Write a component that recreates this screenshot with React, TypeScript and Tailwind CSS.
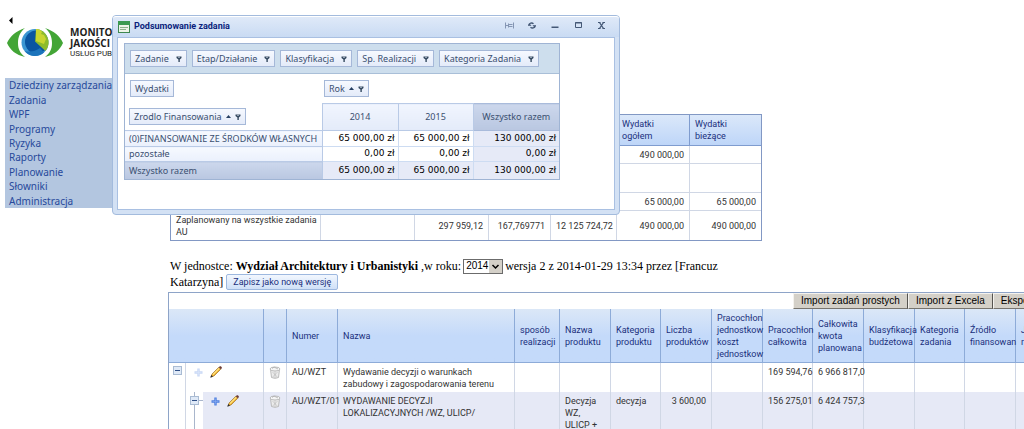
import type { ReactNode } from 'react';
import { clsx } from 'clsx';

const menu = [
  'Dziedziny zarządzania',
  'Zadania',
  'WPF',
  'Programy',
  'Ryzyka',
  'Raporty',
  'Planowanie',
  'Słowniki',
  'Administracja',
];

const filters = ['Zadanie', 'Etap/Działanie', 'Klasyfikacja', 'Sp. Realizacji', 'Kategoria Zadania'];

const gridHeaders = [
  ['Numer'],
  ['Nazwa'],
  ['sposób', 'realizacji'],
  ['Nazwa', 'produktu'],
  ['Kategoria', 'produktu'],
  ['Liczba', 'produktów'],
  ['Pracochłon', 'jednostkow', 'koszt', 'jednostkow'],
  ['Pracochłon', 'całkowita'],
  ['Całkowita', 'kwota', 'planowana'],
  ['Klasyfikacja', 'budżetowa'],
  ['Kategoria', 'zadania'],
  ['Źródło', 'finansowan'],
  ['J', 'r'],
];

function Logo() {
  return (
    <div className="flex h-[34px] items-center gap-[7px] pl-[7px]">
      <svg width="56" height="32" viewBox="0 0 56 32" className="shrink-0" aria-hidden="true">
        <path d="M18 1C9 4 3 9 0 16c3 7 9 12 18 14-5-4-7-8-7-14s2-11 7-15Z" fill="#43a536" />
        <path d="M38 1c9 3 15 8 18 15-3 7-9 12-18 14 5-4 7-8 7-14S43 5 38 1Z" fill="#43a536" />
        <circle cx="28" cy="15.5" r="13.5" fill="#3b96d2" />
        <circle cx="29.500" cy="15" r="11.500" fill="#0a55a0" />
        <path d="M29 2A13.500 13.500 0 0 1 38.500 24L28 14.500Z" fill="#8dbb2a" />
        <path d="M29 2c3 0 5 1 6 3l-1 2 3 1 2 4-2 5-8-3Z" fill="#c9d62e" />
        <path d="M17.500 24A13.500 13.500 0 0 0 37 25.500L33 21q-7 5-15.500 3Z" fill="#1c74bb" />
      </svg>
      <div className="font-['Open_Sans',sans-serif] text-[10px] leading-[11px] font-bold whitespace-nowrap text-[#1d1d1b]">
        <div>MONITO</div>
        <div>JAKOŚCI</div>
        <div className="font-[Roboto,sans-serif] text-[8px] leading-[10px] font-normal">USŁUG PUBL</div>
      </div>
    </div>
  );
}

function FilterIcon() {
  return (
    <svg width="6" height="6" viewBox="0 0 6 6" aria-hidden="true">
      <path d="M0.5 0.5h5v1.5L3.8 3.5V6H2.4V3.5L0.5 2Z" fill="#34495f" />
      <path d="M2 1.3h2" stroke="#dbe5f5" strokeWidth="0.7" />
    </svg>
  );
}

function SortIcon() {
  return (
    <svg width="5" height="3" viewBox="0 0 5 3" aria-hidden="true">
      <path d="M2.5 0 5 3H0Z" fill="#263f62" />
    </svg>
  );
}

function FieldButton({ children, sort, filter }: { children: ReactNode; sort?: boolean; filter?: boolean }) {
  return (
    <button
      type="button"
      className="flex h-[17px] items-center gap-1 border border-[#a5b8d8] bg-gradient-to-b from-[#f6f9ff] to-[#e4ebf9] px-1 whitespace-nowrap text-[#3a4f70]"
    >
      {children}
      {sort && <SortIcon />}
      {filter && (
        <span className={clsx(!sort && 'pl-[3px]')}>
          <FilterIcon />
        </span>
      )}
    </button>
  );
}

function WindowButtons() {
  const cls = 'flex h-3 w-3 items-center justify-center';
  return (
    <div className="flex gap-[11px] pr-3 pb-[3px] text-[#445876]">
      <button type="button" aria-label="Przypnij" className={cls}>
        <svg width="9" height="7" viewBox="0 0 9 7" fill="none" stroke="#8495b3">
          <path d="M0.5 0.5v6M0.5 3.5h3M3.5 1.5v4M3.5 2.5h4M3.5 4.5h4M8.5 0.5v6" />
        </svg>
      </button>
      <button type="button" aria-label="Odśwież" className={cls}>
        <svg width="8" height="7" viewBox="0 0 8 7" fill="none" stroke="currentColor" strokeWidth="1.4">
          <path d="M1 3C1 1 4 0.5 5.5 1.8M7 4C7 6 4 6.5 2.5 5.2" />
          <path d="M0 3.500h3L1.500 2ZM5 3.500h3L6.500 5Z" strokeWidth="0.6" fill="currentColor" />
        </svg>
      </button>
      <button type="button" aria-label="Minimalizuj" className={cls}>
        <svg width="8" height="7" viewBox="0 0 8 7">
          <path d="M0.5 4.5h7v1.5h-7Z" fill="currentColor" />
        </svg>
      </button>
      <button type="button" aria-label="Maksymalizuj" className={cls}>
        <svg width="7" height="7" viewBox="0 0 7 7" fill="none" stroke="currentColor">
          <path d="M0.5 0.5h6v5h-6Z" />
          <path d="M0 1h7" />
        </svg>
      </button>
      <button type="button" aria-label="Zamknij" className={cls}>
        <svg width="7" height="7" viewBox="0 0 7 7" fill="none" stroke="currentColor" strokeWidth="1.3">
          <path d="M1.5 0.5 5.5 6.5M5.5 0.5 1.5 6.5" />
          <path d="M0 0.5h2.500M4.500 0.5h2.500M0 6.500h2.500M4.500 6.500h2.500" strokeWidth="1" />
        </svg>
      </button>
    </div>
  );
}

const num = "font-['DejaVu_Sans',sans-serif] pr-[3px]";
const label =
  'border border-l-0 border-[#b9cae6] bg-gradient-to-b from-[#f6f9ff] to-[#eaf0fc] pl-1 text-left font-normal whitespace-nowrap text-[#3a4f70]';

function Pivot() {
  return (
    <div className="w-[436px] border border-[#9fb4d4] font-['Noto_Sans',sans-serif] text-[9px] text-[#3a4f70]">
      <div className="flex h-[30px] items-center gap-[5px] border-b border-[#a9bfd8] bg-[#cddeed] pl-[5px]">
        {filters.map((f) => (
          <FieldButton key={f} filter>
            {f}
          </FieldButton>
        ))}
      </div>
      <div className="flex h-[29px] items-center pl-[5px]">
        <div className="w-[194px]">
          <FieldButton>Wydatki</FieldButton>
        </div>
        <FieldButton sort filter>
          Rok
        </FieldButton>
      </div>
      <table className="w-full table-fixed border-collapse">
        <colgroup>
          <col className="w-[197px]" />
          <col className="w-[76px]" />
          <col className="w-[75px]" />
          <col />
        </colgroup>
        <thead>
          <tr className="h-[27px]">
            <th className="pl-1 font-normal">
              <FieldButton sort filter>
                Zrodlo Finansowania
              </FieldButton>
            </th>
            <th className="border border-[#b9cae6] bg-gradient-to-b from-[#f1f5fe] to-[#e4ebf9] font-normal">2014</th>
            <th className="border border-[#b9cae6] bg-gradient-to-b from-[#f1f5fe] to-[#e4ebf9] font-normal">2015</th>
            <th className="border-y border-[#a9bbdb] bg-gradient-to-b from-[#ccd7ec] to-[#b9c7e1] font-normal">
              Wszystko razem
            </th>
          </tr>
        </thead>
        <tbody className="text-right text-black">
          <tr className="h-4">
            <th className={label}>(0)FINANSOWANIE ZE ŚRODKÓW WŁASNYCH</th>
            <td className={clsx('border border-[#cddcf2]', num)}>65 000,00 zł</td>
            <td className={clsx('border border-[#cddcf2]', num)}>65 000,00 zł</td>
            <td className={clsx('border-y border-[#cddcf2] bg-[#e6eaf7]', num)}>130 000,00 zł</td>
          </tr>
          <tr className="h-[15px]">
            <th className={label}>pozostałe</th>
            <td className={clsx('border border-[#cddcf2]', num)}>0,00 zł</td>
            <td className={clsx('border border-[#cddcf2]', num)}>0,00 zł</td>
            <td className={clsx('border-y border-[#cddcf2] bg-[#e6eaf7]', num)}>0,00 zł</td>
          </tr>
          <tr className="h-[17px]">
            <th className="border-r border-[#b9cae6] bg-gradient-to-b from-[#ccd7ec] to-[#b9c7e1] pl-1 text-left font-normal text-[#3a4f70]">
              Wszystko razem
            </th>
            <td className={clsx('border-r border-[#cddcf2] bg-[#e6eaf7]', num)}>65 000,00 zł</td>
            <td className={clsx('border-r border-[#cddcf2] bg-[#e6eaf7]', num)}>65 000,00 zł</td>
            <td className={clsx('bg-[#e6eaf7]', num)}>130 000,00 zł</td>
          </tr>
        </tbody>
      </table>
    </div>
  );
}

function SummaryDialog() {
  return (
    <section
      role="dialog"
      aria-label="Podsumowanie zadania"
      className="absolute top-[15px] left-[112px] z-10 w-[508px] rounded-[4px] border border-[#a3bbdd] bg-[#d3e1f4] px-1 pb-1"
    >
      <header className="-mx-1 flex h-[21px] items-center justify-between rounded-t-[3px] border-t border-white bg-gradient-to-b from-[#dfe9f8] to-[#c9dbf3]">
        <div className="flex items-center gap-1 pl-[5px]">
          <svg width="12" height="12" viewBox="0 0 12 12" aria-hidden="true">
            <rect x="0.5" y="0.5" width="11" height="11" fill="#eef4e8" stroke="#3f8750" />
            <path d="M0 0h12v4H0Z" fill="#3c9a50" />
            <path d="M2 6.5h8M2 8.5h6" stroke="#8eb28b" />
          </svg>
          <h2 className="font-[Roboto,sans-serif] text-[9px] font-bold text-[#0b1f7c]">Podsumowanie zadania</h2>
        </div>
        <WindowButtons />
      </header>
      <div className="h-[173px] border border-[#a9c0e2] bg-white px-1.5 pt-[5px]">
        <Pivot />
      </div>
    </section>
  );
}

const summaryRows = [
  { h: 'h-[18px]', cells: ['', '', '', '', '', '490 000,00', ''] },
  { h: 'h-[29px]', cells: ['', '', '', '', '', '', ''] },
  { h: 'h-[18px]', cells: ['', '', '', '', '', '65 000,00', '65 000,00'] },
  {
    h: 'h-[29px]',
    cells: [
      'Zaplanowany na wszystkie zadania AU',
      '',
      '297 959,12',
      '167,769771',
      '12 125 724,72',
      '490 000,00',
      '490 000,00',
    ],
  },
];

function SummaryTable() {
  return (
    <div className="ml-[2px] w-[592px] border border-[#8298c4]">
      <table className="w-full table-fixed border-separate border-spacing-0 text-[9px] leading-3 text-[#333]">
        <colgroup>
          <col className="w-[150px]" />
          <col className="w-[94px]" />
          <col className="w-[74px]" />
          <col className="w-[62px]" />
          <col className="w-[66px]" />
          <col className="w-[73px]" />
          <col />
        </colgroup>
        <thead>
          <tr className="h-[31px] bg-gradient-to-b from-[#dbe8fa] to-[#bdd5f8] text-left text-[#1a2f7c]">
            {['', '', '', '', '', 'Wydatki ogółem', 'Wydatki bieżące'].map((h, i) => (
              <th key={i} className="border-r border-b border-[#7f9ccf] pr-7 pl-[5px] font-normal last:border-r-0">
                {h}
              </th>
            ))}
          </tr>
        </thead>
        <tbody>
          {summaryRows.map((row, r) => (
            <tr key={r} className={row.h}>
              {row.cells.map((c, i) => (
                <td
                  key={i}
                  className={clsx(
                    'border-r border-b border-[#d0d7e5] pl-[5px] last:border-r-0',
                    i === 0 ? 'text-left' : 'pr-[5px] text-right whitespace-nowrap',
                    r === 3 && 'border-b-0',
                  )}
                >
                  {c}
                </td>
              ))}
            </tr>
          ))}
        </tbody>
      </table>
    </div>
  );
}

function PlusIcon({ faded }: { faded?: boolean }) {
  return (
    <svg width="9" height="9" viewBox="0 0 9 9" className={clsx(faded && 'opacity-30')} aria-hidden="true">
      <path d="M3.3 0.5h2.4v2.8h2.8v2.4H5.7v2.8H3.3V5.7H0.5V3.3h2.8Z" fill="#4f80e0" />
      <path d="M4.5 1.5v6M1.5 4.5h6" stroke="#8fb0f2" strokeWidth="0.6" />
    </svg>
  );
}

function PencilIcon() {
  return (
    <svg width="12" height="12" viewBox="0 0 12 12" aria-hidden="true">
      <path d="M1.2 10.8 2 8 8.8 1.2 10.800 3.200 4 10Z" fill="#f0b02c" stroke="#8f6420" strokeWidth="0.6" />
      <path d="M2.900 8.600 9.200 2.300" stroke="#ffe789" strokeWidth="1.200" />
      <path d="m8.800 1.200 1-1h1l1 1v1l-1 1Z" fill="#6d3c34" />
      <path d="M0.2 11.800 1.300 9 3 10.700Z" fill="#2b2b2b" />
    </svg>
  );
}

function TrashIcon() {
  return (
    <svg width="12" height="13" viewBox="0 0 12 13" fill="none" stroke="#adadad" strokeWidth="0.8" aria-hidden="true">
      <path d="M1.5 3.5 2.5 11.5Q6 13.2 9.5 11.5L10.5 3.5" fill="#ececec" />
      <ellipse cx="6" cy="3" rx="5" ry="2" fill="#f5f5f5" />
      <path d="M3.5 6 8.3 11M8.5 6 3.7 11M6 5.5V12" strokeWidth="0.5" />
      <path d="M3 2.5 5 1 7 2 9 3" />
    </svg>
  );
}

function Expander() {
  return (
    <svg width="9" height="9" viewBox="0 0 9 9" aria-hidden="true">
      <rect x="0.5" y="0.5" width="8" height="8" fill="#dfe9f7" stroke="#a9bbd3" />
      <path d="M2 4.5h5" stroke="#2f4f86" />
    </svg>
  );
}

function RowActions({ faded }: { faded?: boolean }) {
  return (
    <div className="flex items-center gap-[7px] pl-2">
      <button type="button" aria-label="Dodaj">
        <PlusIcon faded={faded} />
      </button>
      <button type="button" aria-label="Edytuj">
        <PencilIcon />
      </button>
    </div>
  );
}

function TaskGrid() {
  const td = 'border-r border-[#d0d7e5] pt-[3px] pl-[5px] align-top whitespace-nowrap';
  const icon = 'border-r border-[#d0d7e5] pt-[3px] align-top';
  const empty = (n: number) => Array.from({ length: n }, (_, i) => <td key={i} className={td} />);

  return (
    <div className="border-t border-l border-[#8ea4c8]">
      <div className="flex h-4 pl-[624px] font-['Liberation_Sans',sans-serif] text-[10px] text-black">
        {['Import zadań prostych', 'Import z Excela', 'Ekspo'].map((b) => (
          <button
            key={b}
            type="button"
            className="shrink-0 border border-t-[#f4f2ee] border-r-[#55534f] border-b-[#77746e] border-l-[#f4f2ee] bg-[#d4d0c8] px-[7px] leading-[14px] whitespace-nowrap"
          >
            {b}
          </button>
        ))}
      </div>
      <table className="w-[898px] table-fixed border-separate border-spacing-0 text-[9px] leading-3 text-[#333]">
        <colgroup>
          <col className="w-[17px]" />
          <col className="w-[17px]" />
          <col className="w-[61px]" />
          <col className="w-[23px]" />
          <col className="w-[51px]" />
          <col className="w-[177px]" />
          <col className="w-[45px]" />
          <col className="w-[51px]" />
          <col className="w-[50px]" />
          <col className="w-[51px]" />
          <col className="w-[51px]" />
          <col className="w-[50px]" />
          <col className="w-[51px]" />
          <col className="w-[51px]" />
          <col className="w-[50px]" />
          <col className="w-[51px]" />
          <col className="w-[51px]" />
        </colgroup>
        <thead>
          <tr className="h-[54px] bg-gradient-to-b from-[#dbe7f7] via-[#c4dafa] to-[#c4dafa] text-left text-[#1a2f7c]">
            <th colSpan={3} className="border-r border-b border-[#8dabd8]" />
            <th className="border-r border-b border-[#8dabd8]" />
            {gridHeaders.map((lines, i) => (
              <th key={i} className="border-r border-b border-[#8dabd8] pl-[5px] font-normal whitespace-nowrap">
                {lines.map((l, j) => (
                  <div key={j}>{l}</div>
                ))}
              </th>
            ))}
          </tr>
        </thead>
        <tbody>
          <tr className="h-[29px]">
            <td className={clsx(icon, 'pl-1')}>
              <button type="button" aria-label="Zwiń" className="block">
                <Expander />
              </button>
            </td>
            <td colSpan={2} className={icon}>
              <RowActions faded />
            </td>
            <td className={clsx(icon, 'pl-[5px]')}>
              <button type="button" aria-label="Usuń" className="block">
                <TrashIcon />
              </button>
            </td>
            <td className={td}>AU/WZT</td>
            <td className={td}>
              Wydawanie decyzji o warunkach
              <br />
              zabudowy i zagospodarowania terenu
            </td>
            {empty(5)}
            <td className={td}>169 594,76</td>
            <td className={td}>6 966 817,0</td>
            {empty(4)}
          </tr>
          <tr className="h-[60px] bg-[#e6e9f6]">
            <td className="border-r border-[#d0d7e5] bg-white" />
            <td className="bg-white align-top">
              <div className="flex flex-col items-center">
                <span className="h-1 w-px bg-[#a9b6cc]" />
                <div className="flex items-center self-stretch">
                  <button type="button" aria-label="Zwiń" className="ml-1 block">
                    <Expander />
                  </button>
                  <span className="h-px flex-1 bg-[#a9b6cc]" />
                </div>
                <span className="h-12 w-px bg-[#a9b6cc]" />
              </div>
            </td>
            <td className={icon}>
              <RowActions />
            </td>
            <td className={clsx(icon, 'pl-[5px]')}>
              <button type="button" aria-label="Usuń" className="block">
                <TrashIcon />
              </button>
            </td>
            <td className={td}>AU/WZT/01</td>
            <td className={td}>
              WYDAWANIE DECYZJI
              <br />
              LOKALIZACYJNYCH /WZ, ULICP/
            </td>
            <td className={td} />
            <td className={td}>
              Decyzja
              <br />
              WZ,
              <br />
              ULICP +
            </td>
            <td className={td}>decyzja</td>
            <td className={clsx(td, 'pr-[5px] text-right')}>3 600,00</td>
            <td className={td} />
            <td className={td}>156 275,01</td>
            <td className={td}>6 424 757,3</td>
            {empty(4)}
          </tr>
        </tbody>
      </table>
    </div>
  );
}

export default function App() {
  return (
    <div className="relative flex h-screen overflow-hidden bg-white font-[Roboto,sans-serif]">
      <aside className="w-[168px] shrink-0 pt-4 pl-[5px]">
        <button type="button" aria-label="Zwiń menu" className="block h-2 pl-[3px]">
          <svg width="5" height="7" viewBox="0 0 5 7">
            <path d="M4.5 0v7L1 3.5Z" fill="#000" />
          </svg>
        </button>
        <div className="-ml-[5px] pt-[2px]">
          <Logo />
        </div>
        <nav className="mt-[18px] grid h-[130px] grid-rows-9 bg-[#b3c6e0] pl-1 font-['Noto_Sans',sans-serif] text-[10px] text-[#27499b]">
          {menu.map((m) => (
            <a key={m} href="#" className="flex items-center leading-3 whitespace-nowrap">
              {m}
            </a>
          ))}
        </nav>
      </aside>

      <main className="min-w-0 flex-1 overflow-hidden pt-[114px]">
        <SummaryTable />
        <div className="mt-[17px] mb-[2px] pl-[2px] font-['Liberation_Serif',serif] text-[12px] leading-4 text-black">
          <div className="flex items-center gap-[2px] whitespace-nowrap">
            <span>
              W jednostce: <b>Wydział Architektury i Urbanistyki</b> ,w <label htmlFor="rok">roku:</label>
            </span>
            <span className="relative inline-flex">
              <select
                id="rok"
                defaultValue="2014"
                className="h-[15px] w-10 appearance-none rounded-none border border-[#6b6b6b] bg-white pl-[2px] font-['Liberation_Sans',sans-serif] text-[10px] leading-3"
              >
                <option>2014</option>
                <option>2015</option>
              </select>
              <svg
                width="13"
                height="13"
                viewBox="0 0 13 13"
                className="pointer-events-none absolute top-px right-px"
                aria-hidden="true"
              >
                <path d="M0 0h13v13H0Z" fill="#d4d0c8" />
                <path d="m3.5 5 3 3 3-3" fill="none" stroke="#000" strokeWidth="1.5" />
              </svg>
            </span>
            <span>wersja 2 z 2014-01-29 13:34 przez [Francuz</span>
          </div>
          <div className="flex items-center gap-[3px]">
            Katarzyna]
            <button
              type="button"
              className="h-4 rounded-[2px] border border-[#9db8df] bg-gradient-to-b from-[#f2f7fe] to-[#cfe0f7] px-1.5 font-[Roboto,sans-serif] text-[9px] leading-3 text-[#1a2f7c]"
            >
              Zapisz jako nową wersję
            </button>
          </div>
        </div>
        <TaskGrid />
      </main>

      <SummaryDialog />
    </div>
  );
}
